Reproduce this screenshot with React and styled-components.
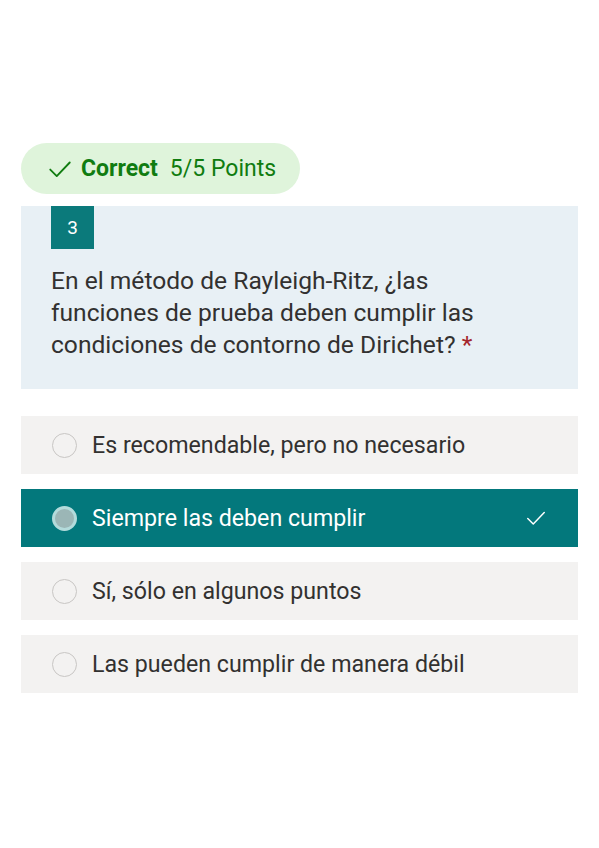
import React from "react";
import styled, { createGlobalStyle } from "styled-components";

const GlobalStyle = createGlobalStyle`
  body {
    margin: 0;
    background: #ffffff;
    font-family: Roboto, "Liberation Sans", Arial, sans-serif;
  }
`;

const Page = styled.div`
  width: 599px;
  min-height: 848px;
  padding: 143px 21px 0;
  box-sizing: border-box;
  display: flex;
  flex-direction: column;
  align-items: flex-start;
`;

const ResultBadge = styled.div`
  height: 51px;
  width: 279px;
  box-sizing: border-box;
  border-radius: 26px;
  background: #dff4db;
  display: flex;
  align-items: center;
  padding-left: 26px;
  gap: 8px;
  color: #107c10;
  font-size: 23px;
`;

const BadgeLabel = styled.span`
  font-weight: 700;
  margin-right: 4px;
`;

const QuestionCard = styled.div`
  margin-top: 12px;
  width: 557px;
  height: 183px;
  box-sizing: border-box;
  background: #e8f0f5;
  padding: 0 30px;
`;

const NumberBox = styled.div`
  width: 43px;
  height: 43px;
  background: #0b7a7b;
  color: #ffffff;
  font-size: 19px;
  display: flex;
  align-items: center;
  justify-content: center;
`;

const QuestionText = styled.p`
  margin: 16px 0 0;
  max-width: 480px;
  font-size: 24.6px;
  line-height: 32px;
  color: #323130;
`;

const Required = styled.span`
  color: #a4262c;
`;

const OptionList = styled.div`
  margin-top: 27px;
  width: 557px;
  display: flex;
  flex-direction: column;
  gap: 15px;
`;

const Option = styled.div`
  height: 58px;
  box-sizing: border-box;
  display: flex;
  align-items: center;
  padding: 0 31px 0 31px;
  background: ${(p) => (p.$selected ? "#03787c" : "#f3f2f1")};
  color: ${(p) => (p.$selected ? "#ffffff" : "#323130")};
  font-size: 23.2px;
`;

const Radio = styled.span`
  width: 25px;
  height: 25px;
  box-sizing: border-box;
  border-radius: 50%;
  flex-shrink: 0;
  border: ${(p) => (p.$selected ? "3px solid #b3dbdb" : "1.5px solid #c8c6c4")};
  background: ${(p) => (p.$selected ? "#9bb6b6" : "transparent")};
  margin-right: 15px;
`;

const OptionLabel = styled.span`
  flex: 1;
`;

const Check = ({ size = 24, color, width = 1.6 }) => (
  <svg width={size} height={size} viewBox="0 0 24 24" fill="none">
    <path d="M3 12.5l6 6L21 6" stroke={color} strokeWidth={width} strokeLinecap="round" strokeLinejoin="round" />
  </svg>
);

const options = [
  "Es recomendable, pero no necesario",
  "Siempre las deben cumplir",
  "Sí, sólo en algunos puntos",
  "Las pueden cumplir de manera débil",
];

export default function App() {
  return (
    <>
      <GlobalStyle />
      <Page>
        <ResultBadge>
          <Check size={26} color="#107c10" width={1.7} />
          <BadgeLabel>Correct</BadgeLabel>
          <span>5/5 Points</span>
        </ResultBadge>
        <QuestionCard>
          <NumberBox>3</NumberBox>
          <QuestionText>
            En el método de Rayleigh-Ritz, ¿las funciones de prueba deben
            cumplir las condiciones de contorno de Dirichet?{" "}
            <Required>*</Required>
          </QuestionText>
        </QuestionCard>
        <OptionList>
          {options.map((text, i) => {
            const selected = i === 1;
            return (
              <Option key={text} $selected={selected}>
                <Radio $selected={selected} />
                <OptionLabel>{text}</OptionLabel>
                {selected && <Check size={22} color="#ffffff" width={1.6} />}
              </Option>
            );
          })}
        </OptionList>
      </Page>
    </>
  );
}
